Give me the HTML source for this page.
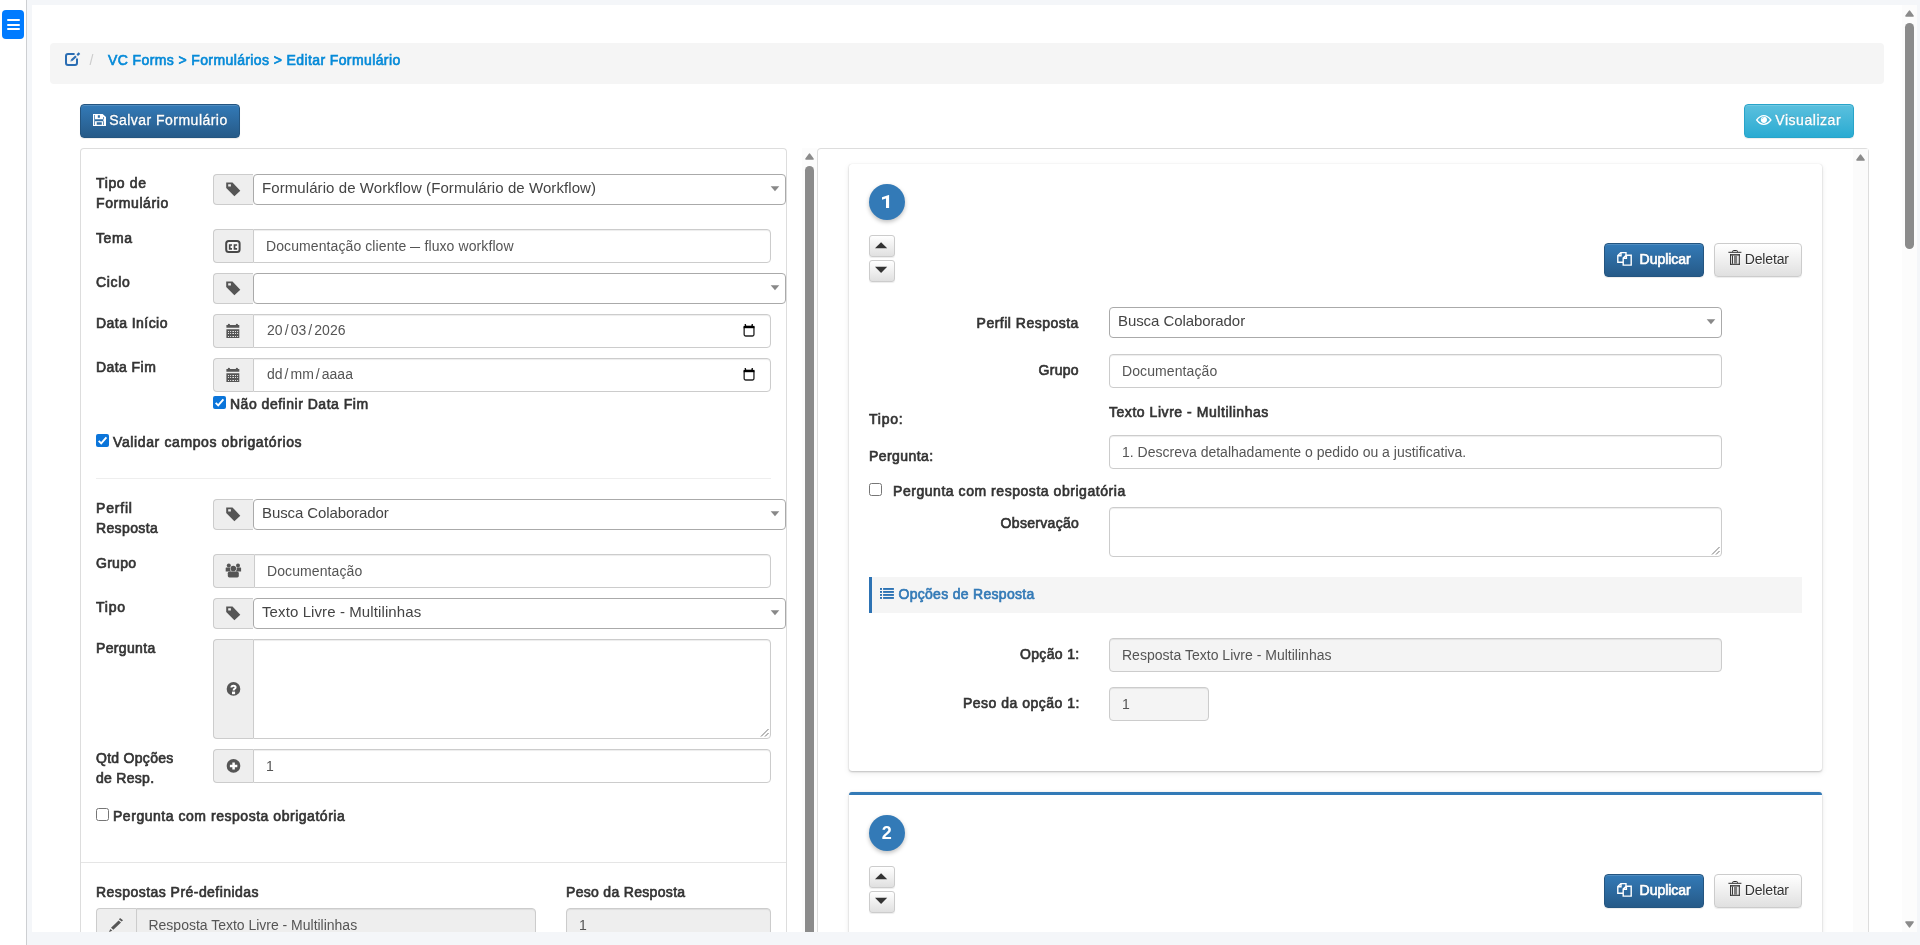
<!DOCTYPE html>
<html><head><meta charset="utf-8"><title>Editar Formulário</title>
<style>
html,body{margin:0;padding:0;overflow:hidden}
body{width:1920px;height:945px;overflow:hidden;position:relative;background:#f4f6f9;font-family:"Liberation Sans", sans-serif;font-size:14px;color:#333}
</style></head><body><div style="position:absolute;left:0;top:0;width:1920px;height:945px;overflow:hidden;will-change:transform">
<div style="position:absolute;left:0px;top:0px;width:26px;height:945px;box-sizing:border-box;background:#fff"></div>
<div style="position:absolute;left:26px;top:0px;width:1px;height:945px;box-sizing:border-box;background:#cdcfd2"></div>
<div style="position:absolute;left:32px;top:5px;width:1885px;height:927px;box-sizing:border-box;background:#fff"></div>
<div style="position:absolute;left:2px;top:10px;width:22px;height:29px;box-sizing:border-box;background:#007bff;border-radius:4px"></div>
<div style="position:absolute;left:7px;top:19.2px;width:13px;height:2.3px;box-sizing:border-box;background:#fff;border-radius:1px"></div>
<div style="position:absolute;left:7px;top:23.7px;width:13px;height:2.3px;box-sizing:border-box;background:#fff;border-radius:1px"></div>
<div style="position:absolute;left:7px;top:28.1px;width:13px;height:2.3px;box-sizing:border-box;background:#fff;border-radius:1px"></div>
<div style="position:absolute;left:1902px;top:5px;width:15px;height:927px;box-sizing:border-box;background:#fcfcfc"></div>
<svg style="position:absolute;left:1905px;top:10px;overflow:visible" width="10" height="8" viewBox="0 0 10 8"><path d="M4.5 1.2 L8 6 L1 6 Z" fill="#8b8b8b" stroke="#8b8b8b" stroke-width="1.6" stroke-linejoin="round"/></svg>
<div style="position:absolute;left:1905px;top:23px;width:9px;height:226px;box-sizing:border-box;background:#8b8b8b;border-radius:4.5px"></div>
<svg style="position:absolute;left:1905px;top:921px;overflow:visible" width="10" height="8" viewBox="0 0 10 8"><path d="M4.5 5.8 L8 1 L1 1 Z" fill="#8b8b8b" stroke="#8b8b8b" stroke-width="1.6" stroke-linejoin="round"/></svg>
<div style="position:absolute;left:50px;top:43px;width:1834px;height:41px;box-sizing:border-box;background:#f5f5f5;border-radius:4px"></div>
<span style="position:absolute;left:89.50px;top:50px;line-height:20px;white-space:pre;font-size:14px;font-weight:400;color:#ccc;letter-spacing:0.000px;">/</span>
<span style="position:absolute;left:108.00px;top:50px;line-height:20px;white-space:pre;font-size:14px;font-weight:400;color:#068ad8;letter-spacing:0.390px;-webkit-text-stroke:0.65px #068ad8;">VC Forms &gt; Formulários &gt; Editar Formulário</span>
<div style="position:absolute;left:80px;top:104px;width:160px;height:34px;box-sizing:border-box;background:linear-gradient(#337ab7,#265a88);border:1px solid #245580;border-radius:4px;box-shadow:inset 0 1px 0 rgba(255,255,255,.15),0 1px 1px rgba(0,0,0,.075)"></div>
<span style="position:absolute;left:109.14px;top:110px;line-height:20px;white-space:pre;font-size:14px;font-weight:400;color:#fff;letter-spacing:0.478px;text-shadow:0 -1px 0 rgba(0,0,0,.2);-webkit-text-stroke:0.3px #fff;">Salvar Formulário</span>
<div style="position:absolute;left:1744px;top:104px;width:110px;height:34px;box-sizing:border-box;background:linear-gradient(#5bc0de,#2aabd2);border:1px solid #28a4c9;border-radius:4px;box-shadow:inset 0 1px 0 rgba(255,255,255,.15),0 1px 1px rgba(0,0,0,.075)"></div>
<span style="position:absolute;left:1775.30px;top:110px;line-height:20px;white-space:pre;font-size:14px;font-weight:400;color:#fff;letter-spacing:0.534px;text-shadow:0 -1px 0 rgba(0,0,0,.2);-webkit-text-stroke:0.3px #fff;">Visualizar</span>
<div style="position:absolute;left:80px;top:148px;width:707px;height:800px;box-sizing:border-box;border:1px solid #ddd;border-radius:4px 4px 0 0;border-bottom:none"></div>
<div style="position:absolute;left:802px;top:148px;width:15px;height:800px;box-sizing:border-box;background:#fcfcfc"></div>
<svg style="position:absolute;left:805px;top:153px;overflow:visible" width="10" height="8" viewBox="0 0 10 8"><path d="M4.5 1.2 L8 6 L1 6 Z" fill="#8b8b8b" stroke="#8b8b8b" stroke-width="1.6" stroke-linejoin="round"/></svg>
<div style="position:absolute;left:805px;top:166px;width:9px;height:800px;box-sizing:border-box;background:#8b8b8b;border-radius:4.5px"></div>
<span style="position:absolute;left:96.00px;top:173px;line-height:20px;white-space:pre;font-size:14px;font-weight:400;color:#333;letter-spacing:0.640px;-webkit-text-stroke:0.65px #333;">Tipo de</span>
<span style="position:absolute;left:96.00px;top:193px;line-height:20px;white-space:pre;font-size:14px;font-weight:400;color:#333;letter-spacing:0.591px;-webkit-text-stroke:0.65px #333;">Formulário</span>
<div style="position:absolute;left:213px;top:174px;width:40px;height:31px;box-sizing:border-box;background:#eee;border:1px solid #ccc;border-right:none;border-radius:4px 0 0 4px;"></div>
<div style="position:absolute;left:253px;top:174px;width:533px;height:31px;box-sizing:border-box;background:#fff;border:1px solid #aaa;border-radius:4px"></div>
<svg style="position:absolute;left:770px;top:186px;overflow:visible" width="10" height="7" viewBox="0 0 10 7"><g transform="translate(0.5,0)"><path d="M0.2 0.2 L8.8 0.2 L4.5 5.2 Z" fill="#888"/></g></svg>
<span style="position:absolute;left:262.00px;top:178px;line-height:20px;white-space:pre;font-size:15px;font-weight:400;color:#444;letter-spacing:0.079px;">Formulário de Workflow (Formulário de Workflow)</span>
<span style="position:absolute;left:96.00px;top:228px;line-height:20px;white-space:pre;font-size:14px;font-weight:400;color:#333;letter-spacing:0.582px;-webkit-text-stroke:0.65px #333;">Tema</span>
<div style="position:absolute;left:213px;top:229px;width:40px;height:34px;box-sizing:border-box;background:#eee;border:1px solid #ccc;border-right:none;border-radius:4px 0 0 4px;"></div>
<div style="position:absolute;left:253px;top:229px;width:518px;height:34px;box-sizing:border-box;background:#fff;border:1px solid #ccc;border-radius:0 4px 4px 0;box-shadow:inset 0 1px 1px rgba(0,0,0,.075);"></div>
<span style="position:absolute;left:266.00px;top:236px;line-height:20px;white-space:pre;font-size:14px;font-weight:400;color:#555;letter-spacing:0.093px;">Documentação cliente <span style="display:inline-block;transform:scaleX(.72);margin:0 -2px">—</span> fluxo workflow</span>
<span style="position:absolute;left:96.00px;top:272px;line-height:20px;white-space:pre;font-size:14px;font-weight:400;color:#333;letter-spacing:0.688px;-webkit-text-stroke:0.65px #333;">Ciclo</span>
<div style="position:absolute;left:213px;top:273px;width:40px;height:31px;box-sizing:border-box;background:#eee;border:1px solid #ccc;border-right:none;border-radius:4px 0 0 4px;"></div>
<div style="position:absolute;left:253px;top:273px;width:533px;height:31px;box-sizing:border-box;background:#fff;border:1px solid #aaa;border-radius:4px"></div>
<svg style="position:absolute;left:770px;top:285px;overflow:visible" width="10" height="7" viewBox="0 0 10 7"><g transform="translate(0.5,0)"><path d="M0.2 0.2 L8.8 0.2 L4.5 5.2 Z" fill="#888"/></g></svg>
<span style="position:absolute;left:96.00px;top:313px;line-height:20px;white-space:pre;font-size:14px;font-weight:400;color:#333;letter-spacing:0.450px;-webkit-text-stroke:0.65px #333;">Data Início</span>
<div style="position:absolute;left:213px;top:314px;width:40px;height:34px;box-sizing:border-box;background:#eee;border:1px solid #ccc;border-right:none;border-radius:4px 0 0 4px;"></div>
<div style="position:absolute;left:253px;top:314px;width:518px;height:34px;box-sizing:border-box;background:#fff;border:1px solid #ccc;border-radius:0 4px 4px 0;box-shadow:inset 0 1px 1px rgba(0,0,0,.075);"></div>
<span style="position:absolute;left:267.00px;top:320px;line-height:20px;white-space:pre;font-size:14px;font-weight:400;color:#555;letter-spacing:0.056px;">20<span style="margin:0 2px">/</span>03<span style="margin:0 2px">/</span>2026</span>
<span style="position:absolute;left:96.00px;top:357px;line-height:20px;white-space:pre;font-size:14px;font-weight:400;color:#333;letter-spacing:0.429px;-webkit-text-stroke:0.65px #333;">Data Fim</span>
<div style="position:absolute;left:213px;top:358px;width:40px;height:34px;box-sizing:border-box;background:#eee;border:1px solid #ccc;border-right:none;border-radius:4px 0 0 4px;"></div>
<div style="position:absolute;left:253px;top:358px;width:518px;height:34px;box-sizing:border-box;background:#fff;border:1px solid #ccc;border-radius:0 4px 4px 0;box-shadow:inset 0 1px 1px rgba(0,0,0,.075);"></div>
<span style="position:absolute;left:267.00px;top:364px;line-height:20px;white-space:pre;font-size:14px;font-weight:400;color:#555;letter-spacing:0.009px;">dd<span style="margin:0 2px">/</span>mm<span style="margin:0 2px">/</span>aaaa</span>
<div style="position:absolute;left:213px;top:396px;width:13px;height:13px;box-sizing:border-box;"><svg width="13" height="13" viewBox="0 0 13 13" style="position:absolute;left:0;top:0"><rect x="0" y="0" width="13" height="13" rx="2" fill="#0b75da"/><path d="M2.7 6.9 L5.2 9.4 L10.4 3.4" fill="none" stroke="#fff" stroke-width="1.9"/></svg></div>
<span style="position:absolute;left:230.00px;top:394px;line-height:20px;white-space:pre;font-size:14px;font-weight:400;color:#333;letter-spacing:0.511px;-webkit-text-stroke:0.65px #333;">Não definir Data Fim</span>
<div style="position:absolute;left:96px;top:434px;width:13px;height:13px;box-sizing:border-box;"><svg width="13" height="13" viewBox="0 0 13 13" style="position:absolute;left:0;top:0"><rect x="0" y="0" width="13" height="13" rx="2" fill="#0b75da"/><path d="M2.7 6.9 L5.2 9.4 L10.4 3.4" fill="none" stroke="#fff" stroke-width="1.9"/></svg></div>
<span style="position:absolute;left:113.00px;top:432px;line-height:20px;white-space:pre;font-size:14px;font-weight:400;color:#333;letter-spacing:0.619px;-webkit-text-stroke:0.65px #333;">Validar campos obrigatórios</span>
<div style="position:absolute;left:96px;top:478px;width:675px;height:1px;box-sizing:border-box;background:#eee"></div>
<span style="position:absolute;left:96.00px;top:498px;line-height:20px;white-space:pre;font-size:14px;font-weight:400;color:#333;letter-spacing:0.802px;-webkit-text-stroke:0.65px #333;">Perfil</span>
<span style="position:absolute;left:96.00px;top:518px;line-height:20px;white-space:pre;font-size:14px;font-weight:400;color:#333;letter-spacing:0.363px;-webkit-text-stroke:0.65px #333;">Resposta</span>
<div style="position:absolute;left:213px;top:499px;width:40px;height:31px;box-sizing:border-box;background:#eee;border:1px solid #ccc;border-right:none;border-radius:4px 0 0 4px;"></div>
<div style="position:absolute;left:253px;top:499px;width:533px;height:31px;box-sizing:border-box;background:#fff;border:1px solid #aaa;border-radius:4px"></div>
<svg style="position:absolute;left:770px;top:511px;overflow:visible" width="10" height="7" viewBox="0 0 10 7"><g transform="translate(0.5,0)"><path d="M0.2 0.2 L8.8 0.2 L4.5 5.2 Z" fill="#888"/></g></svg>
<span style="position:absolute;left:262.00px;top:503px;line-height:20px;white-space:pre;font-size:15px;font-weight:400;color:#444;letter-spacing:-0.104px;">Busca Colaborador</span>
<span style="position:absolute;left:96.00px;top:553px;line-height:20px;white-space:pre;font-size:14px;font-weight:400;color:#333;letter-spacing:0.283px;-webkit-text-stroke:0.65px #333;">Grupo</span>
<div style="position:absolute;left:213px;top:554px;width:41px;height:34px;box-sizing:border-box;background:#eee;border:1px solid #ccc;border-right:none;border-radius:4px 0 0 4px;"></div>
<div style="position:absolute;left:254px;top:554px;width:517px;height:34px;box-sizing:border-box;background:#fff;border:1px solid #ccc;border-radius:0 4px 4px 0;box-shadow:inset 0 1px 1px rgba(0,0,0,.075);"></div>
<span style="position:absolute;left:267.00px;top:561px;line-height:20px;white-space:pre;font-size:14px;font-weight:400;color:#555;letter-spacing:0.100px;">Documentação</span>
<span style="position:absolute;left:96.00px;top:597px;line-height:20px;white-space:pre;font-size:14px;font-weight:400;color:#333;letter-spacing:0.772px;-webkit-text-stroke:0.65px #333;">Tipo</span>
<div style="position:absolute;left:213px;top:598px;width:40px;height:31px;box-sizing:border-box;background:#eee;border:1px solid #ccc;border-right:none;border-radius:4px 0 0 4px;"></div>
<div style="position:absolute;left:253px;top:598px;width:533px;height:31px;box-sizing:border-box;background:#fff;border:1px solid #aaa;border-radius:4px"></div>
<svg style="position:absolute;left:770px;top:610px;overflow:visible" width="10" height="7" viewBox="0 0 10 7"><g transform="translate(0.5,0)"><path d="M0.2 0.2 L8.8 0.2 L4.5 5.2 Z" fill="#888"/></g></svg>
<span style="position:absolute;left:262.00px;top:602px;line-height:20px;white-space:pre;font-size:15px;font-weight:400;color:#444;letter-spacing:0.101px;">Texto Livre - Multilinhas</span>
<span style="position:absolute;left:96.00px;top:638px;line-height:20px;white-space:pre;font-size:14px;font-weight:400;color:#333;letter-spacing:0.339px;-webkit-text-stroke:0.65px #333;">Pergunta</span>
<div style="position:absolute;left:213px;top:639px;width:40px;height:100px;box-sizing:border-box;background:#eee;border:1px solid #ccc;border-right:none;border-radius:4px 0 0 4px;"></div>
<div style="position:absolute;left:253px;top:639px;width:518px;height:100px;box-sizing:border-box;background:#fff;border:1px solid #ccc;border-radius:0 4px 4px 0;box-shadow:inset 0 1px 1px rgba(0,0,0,.075);"></div>
<svg style="position:absolute;left:758px;top:726px;overflow:visible" width="12" height="12" viewBox="0 0 12 12"><path d="M3 10.5 L10.5 3 M7 10.5 L10.5 7" stroke="#666" stroke-width="0.9" fill="none"/></svg>
<span style="position:absolute;left:96.00px;top:748px;line-height:20px;white-space:pre;font-size:14px;font-weight:400;color:#333;letter-spacing:0.289px;-webkit-text-stroke:0.65px #333;">Qtd Opções</span>
<span style="position:absolute;left:96.00px;top:768px;line-height:20px;white-space:pre;font-size:14px;font-weight:400;color:#333;letter-spacing:0.286px;-webkit-text-stroke:0.65px #333;">de Resp.</span>
<div style="position:absolute;left:213px;top:749px;width:40px;height:34px;box-sizing:border-box;background:#eee;border:1px solid #ccc;border-right:none;border-radius:4px 0 0 4px;"></div>
<div style="position:absolute;left:253px;top:749px;width:518px;height:34px;box-sizing:border-box;background:#fff;border:1px solid #ccc;border-radius:0 4px 4px 0;box-shadow:inset 0 1px 1px rgba(0,0,0,.075);"></div>
<span style="position:absolute;left:266.00px;top:756px;line-height:20px;white-space:pre;font-size:14px;font-weight:400;color:#555;letter-spacing:0.000px;">1</span>
<div style="position:absolute;left:96px;top:808px;width:13px;height:13px;box-sizing:border-box;background:#fff;border:1px solid #767676;border-radius:2.5px"></div>
<span style="position:absolute;left:113.00px;top:806px;line-height:20px;white-space:pre;font-size:14px;font-weight:400;color:#333;letter-spacing:0.531px;-webkit-text-stroke:0.65px #333;">Pergunta com resposta obrigatória</span>
<div style="position:absolute;left:81px;top:862px;width:705px;height:1px;box-sizing:border-box;background:#e5e5e5"></div>
<span style="position:absolute;left:96.00px;top:882px;line-height:20px;white-space:pre;font-size:14px;font-weight:400;color:#333;letter-spacing:0.457px;-webkit-text-stroke:0.65px #333;">Respostas Pré-definidas</span>
<span style="position:absolute;left:566.00px;top:882px;line-height:20px;white-space:pre;font-size:14px;font-weight:400;color:#333;letter-spacing:0.314px;-webkit-text-stroke:0.65px #333;">Peso da Resposta</span>
<div style="position:absolute;left:96px;top:908px;width:40px;height:40px;box-sizing:border-box;background:#eee;border:1px solid #ccc;border-right:none;border-radius:4px 0 0 0"></div>
<div style="position:absolute;left:136px;top:908px;width:400px;height:40px;box-sizing:border-box;background:#eee;border:1px solid #ccc;border-radius:0 4px 0 0;box-shadow:inset 0 1px 1px rgba(0,0,0,.075)"></div>
<span style="position:absolute;left:148.50px;top:915px;line-height:20px;white-space:pre;font-size:14px;font-weight:400;color:#555;letter-spacing:-0.013px;">Resposta Texto Livre - Multilinhas</span>
<div style="position:absolute;left:566px;top:908px;width:205px;height:40px;box-sizing:border-box;background:#eee;border:1px solid #ccc;border-radius:4px 4px 0 0;box-shadow:inset 0 1px 1px rgba(0,0,0,.075)"></div>
<span style="position:absolute;left:579.00px;top:915px;line-height:20px;white-space:pre;font-size:14px;font-weight:400;color:#555;letter-spacing:0.000px;">1</span>
<div style="position:absolute;left:817px;top:148px;width:1052px;height:800px;box-sizing:border-box;border:1px solid #ddd;border-radius:4px 4px 0 0;border-bottom:none"></div>
<div style="position:absolute;left:1853px;top:149px;width:15px;height:800px;box-sizing:border-box;background:#fbfbfb"></div>
<svg style="position:absolute;left:1856px;top:154px;overflow:visible" width="10" height="8" viewBox="0 0 10 8"><path d="M4.5 1.2 L8 6 L1 6 Z" fill="#8b8b8b" stroke="#8b8b8b" stroke-width="1.6" stroke-linejoin="round"/></svg>
<div style="position:absolute;left:849px;top:163.5px;width:973px;height:607px;box-sizing:border-box;background:#fff;border-radius:3px;box-shadow:0 1px 2px rgba(0,0,0,.2),0 2px 6px rgba(0,0,0,.08),0 0 1px rgba(0,0,0,.12);"></div>
<div style="position:absolute;left:869px;top:184.0px;width:36px;height:36px;box-sizing:border-box;background:#337ab7;border-radius:50%;box-shadow:0 2px 4px rgba(0,0,0,.25)"></div>
<svg style="position:absolute;left:869px;top:184px;overflow:visible" width="37" height="37" viewBox="0 0 37 37"><path d="M20.1 10.9 V23.9 H17 V14.4 L13 15.8 V13.2 L19.7 10.9 Z" fill="#fff"/></svg>
<div style="position:absolute;left:869px;top:235px;width:26px;height:21.5px;box-sizing:border-box;background:linear-gradient(#fff,#e0e0e0);border:1px solid #ccc;border-radius:3px;box-shadow:inset 0 1px 0 rgba(255,255,255,.15),0 1px 1px rgba(0,0,0,.075)"><svg style="position:absolute;left:4px;top:6px;overflow:visible" width="14" height="7" viewBox="0 0 14 7"><path d="M7.1 0.2 L13.2 6.3 L1.0 6.3 Z" fill="#333"/></svg></div>
<div style="position:absolute;left:869px;top:260px;width:26px;height:21.5px;box-sizing:border-box;background:linear-gradient(#fff,#e0e0e0);border:1px solid #ccc;border-radius:3px;box-shadow:inset 0 1px 0 rgba(255,255,255,.15),0 1px 1px rgba(0,0,0,.075)"><svg style="position:absolute;left:4px;top:5px;overflow:visible" width="14" height="8" viewBox="0 0 14 8"><path d="M7.1 6.9 L13.2 0.8 L1.0 0.8 Z" fill="#333"/></svg></div>
<div style="position:absolute;left:1604px;top:243px;width:100px;height:34px;box-sizing:border-box;background:linear-gradient(#337ab7,#265a88);border:1px solid #245580;border-radius:4px;box-shadow:inset 0 1px 0 rgba(255,255,255,.15),0 1px 1px rgba(0,0,0,.075)"></div>
<span style="position:absolute;left:1639.60px;top:249px;line-height:20px;white-space:pre;font-size:14px;font-weight:400;color:#fff;letter-spacing:-0.044px;text-shadow:0 -1px 0 rgba(0,0,0,.2);-webkit-text-stroke:0.65px #fff;">Duplicar</span>
<div style="position:absolute;left:1714px;top:243px;width:88px;height:34px;box-sizing:border-box;background:linear-gradient(#fff,#e0e0e0);border:1px solid #ccc;border-radius:4px;box-shadow:inset 0 1px 0 rgba(255,255,255,.15),0 1px 1px rgba(0,0,0,.075)"></div>
<span style="position:absolute;left:1744.70px;top:249px;line-height:20px;white-space:pre;font-size:14px;font-weight:400;color:#333;letter-spacing:-0.142px;text-shadow:0 1px 0 #fff;">Deletar</span>
<span style="position:absolute;left:976.60px;top:313px;line-height:20px;white-space:pre;font-size:14px;font-weight:400;color:#333;letter-spacing:0.489px;-webkit-text-stroke:0.65px #333;">Perfil Resposta</span>
<div style="position:absolute;left:1109px;top:307px;width:613px;height:31px;box-sizing:border-box;background:#fff;border:1px solid #aaa;border-radius:4px"></div>
<svg style="position:absolute;left:1706px;top:319px;overflow:visible" width="10" height="7" viewBox="0 0 10 7"><g transform="translate(0.5,0)"><path d="M0.2 0.2 L8.8 0.2 L4.5 5.2 Z" fill="#888"/></g></svg>
<span style="position:absolute;left:1118.00px;top:311px;line-height:20px;white-space:pre;font-size:15px;font-weight:400;color:#444;letter-spacing:-0.080px;">Busca Colaborador</span>
<span style="position:absolute;left:1038.60px;top:360px;line-height:20px;white-space:pre;font-size:14px;font-weight:400;color:#333;letter-spacing:0.267px;-webkit-text-stroke:0.65px #333;">Grupo</span>
<div style="position:absolute;left:1109px;top:354px;width:613px;height:34px;box-sizing:border-box;background:#fff;border:1px solid #ccc;border-radius:4px;box-shadow:inset 0 1px 1px rgba(0,0,0,.075);"></div>
<span style="position:absolute;left:1122.00px;top:361px;line-height:20px;white-space:pre;font-size:14px;font-weight:400;color:#555;letter-spacing:0.100px;">Documentação</span>
<span style="position:absolute;left:869.00px;top:409px;line-height:20px;white-space:pre;font-size:14px;font-weight:400;color:#333;letter-spacing:0.749px;-webkit-text-stroke:0.65px #333;">Tipo:</span>
<span style="position:absolute;left:1109.00px;top:402px;line-height:20px;white-space:pre;font-size:14px;font-weight:400;color:#333;letter-spacing:0.544px;-webkit-text-stroke:0.65px #333;">Texto Livre - Multilinhas</span>
<span style="position:absolute;left:869.00px;top:446px;line-height:20px;white-space:pre;font-size:14px;font-weight:400;color:#333;letter-spacing:0.438px;-webkit-text-stroke:0.65px #333;">Pergunta:</span>
<div style="position:absolute;left:1109px;top:435px;width:613px;height:34px;box-sizing:border-box;background:#fff;border:1px solid #ccc;border-radius:4px;box-shadow:inset 0 1px 1px rgba(0,0,0,.075);"></div>
<span style="position:absolute;left:1122.00px;top:442px;line-height:20px;white-space:pre;font-size:14px;font-weight:400;color:#555;letter-spacing:0.004px;">1. Descreva detalhadamente o pedido ou a justificativa.</span>
<div style="position:absolute;left:869px;top:483px;width:13px;height:13px;box-sizing:border-box;background:#fff;border:1px solid #767676;border-radius:2.5px"></div>
<span style="position:absolute;left:893.00px;top:481px;line-height:20px;white-space:pre;font-size:14px;font-weight:400;color:#333;letter-spacing:0.543px;-webkit-text-stroke:0.65px #333;">Pergunta com resposta obrigatória</span>
<span style="position:absolute;left:1000.60px;top:513px;line-height:20px;white-space:pre;font-size:14px;font-weight:400;color:#333;letter-spacing:0.308px;-webkit-text-stroke:0.65px #333;">Observação</span>
<div style="position:absolute;left:1109px;top:507px;width:613px;height:50px;box-sizing:border-box;background:#fff;border:1px solid #ccc;border-radius:4px;box-shadow:inset 0 1px 1px rgba(0,0,0,.075);"></div>
<svg style="position:absolute;left:1709px;top:544px;overflow:visible" width="12" height="12" viewBox="0 0 12 12"><path d="M3 10.5 L10.5 3 M7 10.5 L10.5 7" stroke="#666" stroke-width="0.9" fill="none"/></svg>
<div style="position:absolute;left:869px;top:577px;width:933px;height:36px;box-sizing:border-box;background:#f5f5f5;border-left:3px solid #2d73b4"></div>
<span style="position:absolute;left:898.45px;top:584px;line-height:20px;white-space:pre;font-size:14px;font-weight:400;color:#337ab7;letter-spacing:0.303px;-webkit-text-stroke:0.65px #337ab7;">Opções de Resposta</span>
<span style="position:absolute;left:1019.97px;top:644px;line-height:20px;white-space:pre;font-size:14px;font-weight:400;color:#333;letter-spacing:0.351px;-webkit-text-stroke:0.65px #333;">Opção 1:</span>
<div style="position:absolute;left:1109px;top:638px;width:613px;height:34px;box-sizing:border-box;background:#f4f4f4;border:1px solid #ccc;border-radius:4px;box-shadow:inset 0 1px 1px rgba(0,0,0,.075);"></div>
<span style="position:absolute;left:1122.00px;top:645px;line-height:20px;white-space:pre;font-size:14px;font-weight:400;color:#555;letter-spacing:0.013px;">Resposta Texto Livre - Multilinhas</span>
<span style="position:absolute;left:962.97px;top:693px;line-height:20px;white-space:pre;font-size:14px;font-weight:400;color:#333;letter-spacing:0.495px;-webkit-text-stroke:0.65px #333;">Peso da opção 1:</span>
<div style="position:absolute;left:1109px;top:687px;width:100px;height:34px;box-sizing:border-box;background:#f4f4f4;border:1px solid #ccc;border-radius:4px;box-shadow:inset 0 1px 1px rgba(0,0,0,.075);"></div>
<span style="position:absolute;left:1122.00px;top:694px;line-height:20px;white-space:pre;font-size:14px;font-weight:400;color:#555;letter-spacing:0.000px;">1</span>
<div style="position:absolute;left:849px;top:792px;width:973px;height:200px;box-sizing:border-box;background:#fff;border-radius:3px;box-shadow:0 1px 2px rgba(0,0,0,.2),0 2px 6px rgba(0,0,0,.08),0 0 1px rgba(0,0,0,.12);border-top:3px solid #337ab7;"></div>
<div style="position:absolute;left:869px;top:815px;width:36px;height:36px;box-sizing:border-box;background:#337ab7;border-radius:50%;box-shadow:0 2px 4px rgba(0,0,0,.25)"></div>
<span style="position:absolute;left:881.80px;top:823px;line-height:20px;white-space:pre;font-size:18px;font-weight:700;color:#fff;letter-spacing:0.000px;">2</span>
<div style="position:absolute;left:869px;top:866px;width:26px;height:21.5px;box-sizing:border-box;background:linear-gradient(#fff,#e0e0e0);border:1px solid #ccc;border-radius:3px;box-shadow:inset 0 1px 0 rgba(255,255,255,.15),0 1px 1px rgba(0,0,0,.075)"><svg style="position:absolute;left:4px;top:6px;overflow:visible" width="14" height="7" viewBox="0 0 14 7"><path d="M7.1 0.2 L13.2 6.3 L1.0 6.3 Z" fill="#333"/></svg></div>
<div style="position:absolute;left:869px;top:891px;width:26px;height:21.5px;box-sizing:border-box;background:linear-gradient(#fff,#e0e0e0);border:1px solid #ccc;border-radius:3px;box-shadow:inset 0 1px 0 rgba(255,255,255,.15),0 1px 1px rgba(0,0,0,.075)"><svg style="position:absolute;left:4px;top:5px;overflow:visible" width="14" height="8" viewBox="0 0 14 8"><path d="M7.1 6.9 L13.2 0.8 L1.0 0.8 Z" fill="#333"/></svg></div>
<div style="position:absolute;left:1604px;top:874px;width:100px;height:34px;box-sizing:border-box;background:linear-gradient(#337ab7,#265a88);border:1px solid #245580;border-radius:4px;box-shadow:inset 0 1px 0 rgba(255,255,255,.15),0 1px 1px rgba(0,0,0,.075)"></div>
<span style="position:absolute;left:1639.60px;top:880px;line-height:20px;white-space:pre;font-size:14px;font-weight:400;color:#fff;letter-spacing:-0.044px;text-shadow:0 -1px 0 rgba(0,0,0,.2);-webkit-text-stroke:0.65px #fff;">Duplicar</span>
<div style="position:absolute;left:1714px;top:874px;width:88px;height:34px;box-sizing:border-box;background:linear-gradient(#fff,#e0e0e0);border:1px solid #ccc;border-radius:4px;box-shadow:inset 0 1px 0 rgba(255,255,255,.15),0 1px 1px rgba(0,0,0,.075)"></div>
<span style="position:absolute;left:1744.70px;top:880px;line-height:20px;white-space:pre;font-size:14px;font-weight:400;color:#333;letter-spacing:-0.142px;text-shadow:0 1px 0 #fff;">Deletar</span>
<svg style="position:absolute;left:65px;top:52px;overflow:visible" width="16" height="15" viewBox="0 0 16 15"><g transform="translate(0,0.5)"><path d="M9.6 1.5 H3 Q1 1.5 1 3.5 V10.5 Q1 12.5 3 12.5 H10 Q12 12.5 12 10.5 V6" fill="none" stroke="#2a6db3" stroke-width="2"/><path d="M6.6 7.8 L11 3.8" stroke="#2a6db3" stroke-width="2.2" fill="none"/><path d="M5.4 9.1 L5.9 7.2 L7.4 8.6 Z" fill="#2a6db3"/><path d="M12.2 2.7 L14.5 0.7" stroke="#2a6db3" stroke-width="2.2" fill="none"/></g></svg>
<svg style="position:absolute;left:93px;top:114px;overflow:visible" width="14" height="13" viewBox="0 0 14 13"><path fill-rule="evenodd" fill="#fff" d="M0 0 H9.6 L13 3 V12 H0 Z M1 1 V11 H1.7 V1 Z M4.8 1.2 V3.7 H6.9 V1.2 Z M2 5.2 V7.3 H11 V5.2 Z M3.7 8.3 V10.7 H8.8 V8.3 Z M10.2 3 V11 H10.9 V3 Z"/></svg>
<svg style="position:absolute;left:1756px;top:115px;overflow:visible" width="17" height="11" viewBox="0 0 17 11"><path d="M0.7 5 Q4 0.7 7.8 0.7 Q11.6 0.7 14.9 5 Q11.6 9.3 7.8 9.3 Q4 9.3 0.7 5 Z" fill="none" stroke="#fff" stroke-width="1.3"/><circle cx="7.9" cy="4.8" r="3.1" fill="#fff"/><path d="M5.8 4.2 Q6.2 2.8 7.6 2.6" stroke="#4fb4d8" stroke-width="0.6" fill="none"/></svg>
<svg style="position:absolute;left:225px;top:181px;overflow:visible" width="18" height="17" viewBox="0 0 18 17"><g transform="translate(0,0.3)"><path fill-rule="evenodd" fill="#555" d="M1.2 1.1 H7.5 L15.3 9.5 L9.4 14.9 L1.2 6.65 Z M3.2 3 V5.2 H5.9 V3 Z"/></g></svg>
<svg style="position:absolute;left:225px;top:280px;overflow:visible" width="18" height="17" viewBox="0 0 18 17"><g transform="translate(0,0.3)"><path fill-rule="evenodd" fill="#555" d="M1.2 1.1 H7.5 L15.3 9.5 L9.4 14.9 L1.2 6.65 Z M3.2 3 V5.2 H5.9 V3 Z"/></g></svg>
<svg style="position:absolute;left:225px;top:506px;overflow:visible" width="18" height="17" viewBox="0 0 18 17"><g transform="translate(0,0.3)"><path fill-rule="evenodd" fill="#555" d="M1.2 1.1 H7.5 L15.3 9.5 L9.4 14.9 L1.2 6.65 Z M3.2 3 V5.2 H5.9 V3 Z"/></g></svg>
<svg style="position:absolute;left:225px;top:605px;overflow:visible" width="18" height="17" viewBox="0 0 18 17"><g transform="translate(0,0.3)"><path fill-rule="evenodd" fill="#555" d="M1.2 1.1 H7.5 L15.3 9.5 L9.4 14.9 L1.2 6.65 Z M3.2 3 V5.2 H5.9 V3 Z"/></g></svg>
<svg style="position:absolute;left:224px;top:240px;overflow:visible" width="19" height="17" viewBox="0 0 19 17"><rect x="2.2" y="1.0" width="13.4" height="11.1" rx="2.6" fill="#f8f8f8" stroke="#484848" stroke-width="2"/><path d="M8 5.0 H5.7 V8.9 H8 M13.1 5.0 H10.5 V8.9 H13.1" fill="none" stroke="#484848" stroke-width="1.7"/></svg>
<svg style="position:absolute;left:226px;top:323px;overflow:visible" width="15" height="16" viewBox="0 0 15 16"><path fill="#555" d="M0.4 2 H1.7 Q2 0.8 2.9 0.8 Q3.8 0.8 4.1 2 H9.7 Q10 0.8 10.9 0.8 Q11.8 0.8 12.1 2 H13.3 V4.7 H0.4 Z M0.4 6.2 H13.3 V14.9 H0.4 Z"/><rect x="2.0" y="8.0" width="1.0" height="1" fill="#e4e4e4"/><rect x="4.1" y="8.0" width="1.0" height="1" fill="#e4e4e4"/><rect x="6.4" y="8.0" width="1.6" height="1" fill="#e4e4e4"/><rect x="9.0" y="8.0" width="1.0" height="1" fill="#e4e4e4"/><rect x="11.1" y="8.0" width="1.0" height="1" fill="#e4e4e4"/><rect x="2.0" y="10.0" width="1.0" height="1" fill="#e4e4e4"/><rect x="4.1" y="10.0" width="1.0" height="1" fill="#e4e4e4"/><rect x="6.4" y="10.0" width="1.6" height="1" fill="#e4e4e4"/><rect x="9.0" y="10.0" width="1.0" height="1" fill="#e4e4e4"/><rect x="11.1" y="10.0" width="1.0" height="1" fill="#e4e4e4"/><rect x="2.0" y="13.0" width="1.0" height="1" fill="#e4e4e4"/><rect x="4.1" y="13.0" width="1.0" height="1" fill="#e4e4e4"/><rect x="6.4" y="13.0" width="1.6" height="1" fill="#e4e4e4"/><rect x="9.0" y="13.0" width="1.0" height="1" fill="#e4e4e4"/><rect x="11.1" y="13.0" width="1.0" height="1" fill="#e4e4e4"/></svg>
<svg style="position:absolute;left:226px;top:367px;overflow:visible" width="15" height="16" viewBox="0 0 15 16"><path fill="#555" d="M0.4 2 H1.7 Q2 0.8 2.9 0.8 Q3.8 0.8 4.1 2 H9.7 Q10 0.8 10.9 0.8 Q11.8 0.8 12.1 2 H13.3 V4.7 H0.4 Z M0.4 6.2 H13.3 V14.9 H0.4 Z"/><rect x="2.0" y="8.0" width="1.0" height="1" fill="#e4e4e4"/><rect x="4.1" y="8.0" width="1.0" height="1" fill="#e4e4e4"/><rect x="6.4" y="8.0" width="1.6" height="1" fill="#e4e4e4"/><rect x="9.0" y="8.0" width="1.0" height="1" fill="#e4e4e4"/><rect x="11.1" y="8.0" width="1.0" height="1" fill="#e4e4e4"/><rect x="2.0" y="10.0" width="1.0" height="1" fill="#e4e4e4"/><rect x="4.1" y="10.0" width="1.0" height="1" fill="#e4e4e4"/><rect x="6.4" y="10.0" width="1.6" height="1" fill="#e4e4e4"/><rect x="9.0" y="10.0" width="1.0" height="1" fill="#e4e4e4"/><rect x="11.1" y="10.0" width="1.0" height="1" fill="#e4e4e4"/><rect x="2.0" y="13.0" width="1.0" height="1" fill="#e4e4e4"/><rect x="4.1" y="13.0" width="1.0" height="1" fill="#e4e4e4"/><rect x="6.4" y="13.0" width="1.6" height="1" fill="#e4e4e4"/><rect x="9.0" y="13.0" width="1.0" height="1" fill="#e4e4e4"/><rect x="11.1" y="13.0" width="1.0" height="1" fill="#e4e4e4"/></svg>
<svg style="position:absolute;left:225px;top:563px;overflow:visible" width="18" height="16" viewBox="0 0 18 16"><g transform="translate(0,0.1)"><g fill="#555"><circle cx="3.8" cy="2.3" r="2"/><circle cx="13" cy="2.3" r="2"/><circle cx="8.3" cy="5.4" r="2.8"/><path d="M0.7 5 Q0.7 4.5 1.3 4.5 H5 Q4.7 6.5 5.8 8.3 H0.7 Z"/><path d="M16.1 5 Q16.1 4.5 15.5 4.5 H11.7 Q12 6.5 10.9 8.3 H16.1 Z"/><path d="M2.8 10.2 Q2.8 8.3 4.7 8.3 H12 Q13.8 8.3 13.8 10.2 V13 Q13.8 14.4 12.3 14.4 H4.3 Q2.8 14.4 2.8 13 Z"/></g></g></svg>
<svg style="position:absolute;left:226px;top:681px;overflow:visible" width="15" height="15" viewBox="0 0 15 15"><g transform="translate(0.5,0.9)"><circle cx="7" cy="7" r="6.8" fill="#555"/><path d="M4.9 5.7 Q4.9 3.8 7 3.8 Q9.1 3.8 9.1 5.4 Q9.1 6.4 7.9 7.1 Q7.1 7.5 7.1 8.5" fill="none" stroke="#fff" stroke-width="2"/><rect x="5.5" y="9.7" width="3.1" height="2.6" fill="#fff"/></g></svg>
<svg style="position:absolute;left:226px;top:758px;overflow:visible" width="15" height="15" viewBox="0 0 15 15"><g transform="translate(0.5,0.9)"><circle cx="7" cy="7" r="6.8" fill="#555"/><path d="M3.4 7.1 H10.8 M7.1 3.6 V10.6" stroke="#fff" stroke-width="2.5" fill="none"/></g></svg>
<svg style="position:absolute;left:109px;top:918px;overflow:visible" width="15" height="15" viewBox="0 0 15 15"><g fill="#555"><path d="M11 0 L14 2.2 L12.7 3.4 L10 1.4 Z"/><path d="M9.6 2.5 L12 4.4 L4.3 11.7 L2 9.7 Z"/><path d="M1.3 11 L3.3 12.8 L0 14 Z"/></g></svg>
<svg style="position:absolute;left:743px;top:323px;overflow:visible" width="13" height="15" viewBox="0 0 13 15"><g transform="translate(0,0.5)"><path d="M2.2 0.6 L2.6 2.6 M9.4 0.6 L9 2.6" stroke="#000" stroke-width="1.4" fill="none"/><rect x="1.15" y="2.9" width="9.8" height="9.6" rx="1.4" fill="none" stroke="#222" stroke-width="1.3"/><rect x="0.6" y="2.4" width="10.9" height="2.3" fill="#000"/></g></svg>
<svg style="position:absolute;left:743px;top:367px;overflow:visible" width="13" height="15" viewBox="0 0 13 15"><g transform="translate(0,0.5)"><path d="M2.2 0.6 L2.6 2.6 M9.4 0.6 L9 2.6" stroke="#000" stroke-width="1.4" fill="none"/><rect x="1.15" y="2.9" width="9.8" height="9.6" rx="1.4" fill="none" stroke="#222" stroke-width="1.3"/><rect x="0.6" y="2.4" width="10.9" height="2.3" fill="#000"/></g></svg>
<svg style="position:absolute;left:1617px;top:251px;overflow:visible" width="17" height="16" viewBox="0 0 17 16"><g transform="translate(0,0.5)"><g fill="none" stroke="#fff" stroke-width="1.4"><path d="M6 10.7 H0.8 V4 L3.8 1.1 H9 V3.4 M0.8 4.2 H4 V1.2"/><path d="M6.2 6.6 L9.2 3.7 H14.2 V13.6 H6.2 Z M6.2 6.8 H9.4 V3.8"/></g></g></svg>
<svg style="position:absolute;left:1728px;top:250px;overflow:visible" width="15" height="17" viewBox="0 0 15 17"><rect x="0.4" y="1.8" width="13" height="1" fill="#2b2b2b"/><path d="M4.7 2 V1.3 Q4.7 0.5 5.5 0.5 H8.6 Q9.4 0.5 9.4 1.3 V2" fill="none" stroke="#2b2b2b" stroke-width="1"/><rect x="2.1" y="4.2" width="9.7" height="1.3" fill="#2b2b2b"/><rect x="2.1" y="4.2" width="1" height="10.6" fill="#2b2b2b"/><rect x="10.8" y="4.2" width="1" height="10.6" fill="#2b2b2b"/><rect x="2.1" y="13.8" width="9.7" height="1" fill="#2b2b2b"/><rect x="4" y="5.5" width="1" height="8.3" fill="#3a3a3a"/><rect x="6" y="5.5" width="3.1" height="8.3" fill="#7d7d7d"/></svg>
<svg style="position:absolute;left:1617px;top:882px;overflow:visible" width="17" height="16" viewBox="0 0 17 16"><g transform="translate(0,0.5)"><g fill="none" stroke="#fff" stroke-width="1.4"><path d="M6 10.7 H0.8 V4 L3.8 1.1 H9 V3.4 M0.8 4.2 H4 V1.2"/><path d="M6.2 6.6 L9.2 3.7 H14.2 V13.6 H6.2 Z M6.2 6.8 H9.4 V3.8"/></g></g></svg>
<svg style="position:absolute;left:1728px;top:881px;overflow:visible" width="15" height="17" viewBox="0 0 15 17"><rect x="0.4" y="1.8" width="13" height="1" fill="#2b2b2b"/><path d="M4.7 2 V1.3 Q4.7 0.5 5.5 0.5 H8.6 Q9.4 0.5 9.4 1.3 V2" fill="none" stroke="#2b2b2b" stroke-width="1"/><rect x="2.1" y="4.2" width="9.7" height="1.3" fill="#2b2b2b"/><rect x="2.1" y="4.2" width="1" height="10.6" fill="#2b2b2b"/><rect x="10.8" y="4.2" width="1" height="10.6" fill="#2b2b2b"/><rect x="2.1" y="13.8" width="9.7" height="1" fill="#2b2b2b"/><rect x="4" y="5.5" width="1" height="8.3" fill="#3a3a3a"/><rect x="6" y="5.5" width="3.1" height="8.3" fill="#7d7d7d"/></svg>
<svg style="position:absolute;left:880px;top:588px;overflow:visible" width="15" height="12" viewBox="0 0 15 12"><rect x="0" y="0" width="2" height="1.9" fill="#2d73b4"/><rect x="3.1" y="0" width="10.8" height="1.9" fill="#2d73b4"/><rect x="0" y="3" width="2" height="1.9" fill="#2d73b4"/><rect x="3.1" y="3" width="10.8" height="1.9" fill="#2d73b4"/><rect x="0" y="6" width="2" height="1.9" fill="#2d73b4"/><rect x="3.1" y="6" width="10.8" height="1.9" fill="#2d73b4"/><rect x="0" y="9" width="2" height="1.9" fill="#2d73b4"/><rect x="3.1" y="9" width="10.8" height="1.9" fill="#2d73b4"/></svg>
<div style="position:absolute;left:27px;top:932px;width:1893px;height:13px;box-sizing:border-box;background:#f4f6f9"></div>
<div style="position:absolute;left:0px;top:932px;width:26px;height:13px;box-sizing:border-box;background:#fff"></div>
<div style="position:absolute;left:26px;top:932px;width:1px;height:13px;box-sizing:border-box;background:#cdcfd2"></div>
</div></body></html>
